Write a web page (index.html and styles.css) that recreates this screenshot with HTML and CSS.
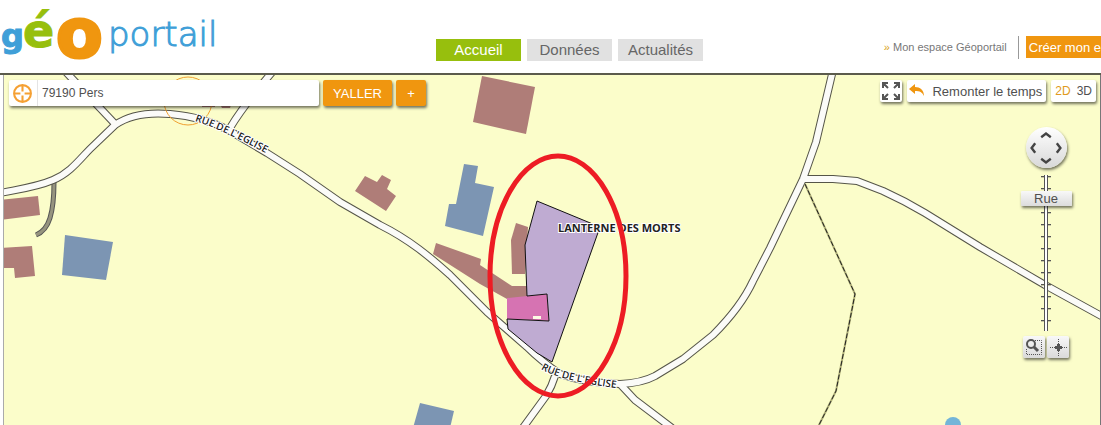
FILE: index.html
```html
<!DOCTYPE html>
<html lang="fr">
<head>
  <meta charset="UTF-8">
  <meta name="viewport" content="width=device-width, initial-scale=1.0">
  <title>Géoportail</title>
  <link rel="stylesheet" href="styles.css">
</head>
<body>
  <header class="header">
    <a class="logo" href="#" aria-label="Géoportail">
      <svg width="224" height="73" viewBox="0 0 224 73">
        <text class="logo-g" x="1" y="47">g</text>
        <text class="logo-e" x="23" y="47">é</text>
        <text class="logo-o" x="56" y="57">o</text>
        <text class="logo-portail" x="108" y="46">portail</text>
      </svg>
    </a>
    <nav class="tabs">
      <a class="tab active" href="#">Accueil</a>
      <a class="tab" href="#">Données</a>
      <a class="tab" href="#">Actualités</a>
    </nav>
    <div class="account">
      <a class="my-space" href="#"><span class="arrows">»</span> Mon espace Géoportail</a>
      <button class="create">Créer mon e</button>
    </div>
  </header>

  <main class="map">
    <svg class="map-canvas" viewBox="4 75 1096 350" preserveAspectRatio="xMinYMin slice">
      <defs>
        <g id="roads">
          <path d="M0 193C20 189 37 187 53 180C70 173 80 159 90 149L115 125Q135 111 170 114Q205 117 230 131L267 153L300 174L340 202L380 225C410 240 430 257 450 275L487 312L527 347Q541 361 560 374Q585 383 620 384Q642 383 655 376L683 359L713 335Q741 307 753 281L770 248L803 179L816 142L833 70"/>
          <path d="M803 179H833L857 181L883 191Q905 201 925 213L980 247L1045 285L1105 318"/>
          <path d="M117 126L64 70"/>
          <path d="M230 128Q243 106 274 70"/>
          <path d="M555 376Q552 386 546 396L522 429"/>
          <path d="M620 384L635 400L672 428"/>
        </g>
        <path id="street-west" d="M195 121Q223 130 267 154"/>
        <path id="street-south" d="M541 369Q558 380 615 388"/>
      </defs>

      <!-- bâtiments -->
      <g class="house">
        <path d="M482 76L535 87L526 134L473 122Z"/>
        <path d="M0 200L38 196L40 215L0 220Z"/>
        <path d="M0 248L32 246L35 276L15 278L14 268H0Z"/>
        <path d="M365 176L377 182L382 175L391 180L387 189L396 196L386 211L355 191Z"/>
        <path d="M436 243L481 259L480 265L512 286H527V297L507 299L480 284L433 254Z"/>
        <path d="M516 223L528 227L525 274H512L511 240Z"/>
        <path d="M202 102H215V107H202ZM220 104L232 102L230 108H222Z"/>
      </g>
      <g class="farm">
        <path d="M65 235L113 242L106 280L62 275Z"/>
        <path d="M464 164L478 166L475 183L494 187L483 236L445 226L449 204H456Z"/>
        <path d="M420 403L454 411L450 428H413Z"/>
      </g>
      <circle class="pond" cx="953" cy="425" r="8"/>

      <!-- routes -->
      <path class="lane-edge" d="M54 182Q54 205 50 218Q46 231 36 235"/>
      <path class="lane" d="M54 182Q54 205 50 218Q46 231 36 235"/>
      <use class="road-edge" href="#roads"/>
      <use class="road" href="#roads"/>
      <path class="trail-base" d="M805 184L855 294L836 391L818 427"/>
      <path class="trail" d="M805 184L855 294L836 391L818 427"/>

      <!-- parcelle -->
      <path class="church" d="M507 298L547 294L549 321L507 319Z"/>
      <path class="parcel" d="M537 201L600 227L552 362L537 353L508 329L507 319L549 321L547 294L527 296L525 245Z"/>
      <rect class="gap" x="533" y="316" width="8" height="3"/>

      <circle class="marker" cx="188" cy="101" r="24"/>
      <text class="label"><textPath href="#street-west">RUE DE L'EGLISE</textPath></text>
      <text class="label"><textPath href="#street-south">RUE DE L'EGLISE</textPath></text>
      <text class="label place" x="558" y="232">LANTERNE DES MORTS</text>
      <ellipse class="ring" cx="558" cy="276" rx="68" ry="120"/>
    </svg>

    <div class="toolbar">
      <form class="search">
        <label class="search-box">
          <svg class="target" viewBox="0 0 20 20" aria-label="Lieu">
            <circle cx="10" cy="10" r="8"/>
            <path d="M10 2v6M10 12v6M2 10h6M12 10h6"/>
          </svg>
          <input class="search-input" type="text" value="79190 Pers">
        </label>
        <button class="orange go" type="button">YALLER</button>
        <button class="orange more" type="button">+</button>
      </form>
      <div class="tools">
        <button class="tool full" aria-label="Plein écran">
          <svg width="20" height="20" viewBox="0 0 20 20">
            <path d="M2 7V2h5M2 2l5 5M13 2h5v5M18 2l-5 5M2 13v5h5M2 18l5-5M18 13v5h-5M18 18l-5-5"/>
          </svg>
        </button>
        <button class="tool time">
          <svg width="16" height="14" viewBox="0 0 16 14">
            <path d="M0 5L6 0V3C11 3 15 6 15 12C13 8 11 7 6 7V10Z"/>
          </svg>
          Remonter le temps
        </button>
        <div class="tool dims">
          <button class="dim on">2D</button>
          <button class="dim">3D</button>
        </div>
      </div>
    </div>

    <div class="navigator">
      <div class="compass">
        <button class="north" aria-label="Nord"><svg viewBox="0 0 10 10"><path d="M1 6l4-3 4 3"/></svg></button>
        <button class="west" aria-label="Ouest"><svg viewBox="0 0 10 10"><path d="M6 1L3 5l3 4"/></svg></button>
        <button class="east" aria-label="Est"><svg viewBox="0 0 10 10"><path d="M4 1l3 4-3 4"/></svg></button>
        <button class="south" aria-label="Sud"><svg viewBox="0 0 10 10"><path d="M1 4l4 3 4-3"/></svg></button>
      </div>
      <div class="zoom">
        <input class="zoom-range" id="zoom" type="range" min="0" max="100" value="89">
        <label class="zoom-label" for="zoom">Rue</label>
      </div>
      <div class="zoom-tools">
        <button class="square" aria-label="Zoom sur une zone">
          <svg width="20" height="20" viewBox="0 0 20 20">
            <path class="dots" d="M11 3.500H17.500V17.500H2.500V12"/>
            <circle cx="7" cy="7" r="4"/>
            <path class="handle" d="M10 10l4 4"/>
          </svg>
        </button>
        <button class="square" aria-label="Recentrer">
          <svg width="20" height="20" viewBox="0 0 20 20">
            <path class="dots" d="M10.500 2V19M2 10.500H19"/>
            <path class="handle" d="M10.500 7v7M7 10.500h7"/>
          </svg>
        </button>
      </div>
    </div>
  </main>
</body>
</html>
```
FILE: styles.css
```css
:root {
  --orange: #f0960f;
  --green: #97bf0d;
  --blue: #3f9fd8;
  --dark: #5b5b4c;
  --ground: #fbfdca;
  --text: #505050;
  --shadow: 1px 2px 3px rgba(0, 0, 0, 0.55);
}

* {
  box-sizing: border-box;
}

body {
  margin: 0;
  min-height: 100vh;
  display: flex;
  flex-direction: column;
  font-family: "Liberation Sans", Arial, sans-serif;
  font-size: 12px;
  color: var(--text);
  background: #fff;
  overflow-x: hidden;
}

button {
  padding: 0;
  border: none;
  background: none;
  font: inherit;
  color: inherit;
  cursor: pointer;
}

a {
  color: inherit;
  text-decoration: none;
}

svg {
  display: block;
}

/* En-tête */
.header {
  display: grid;
  grid-template-columns: 436px auto 1fr;
  align-items: start;
  border-bottom: 2px solid var(--dark);
}

.logo svg {
  overflow: visible;
}

.logo text {
  font-family: "DejaVu Sans", sans-serif;
  font-weight: bold;
  stroke-width: 1;
}

.logo .logo-g {
  font-size: 32px;
  fill: var(--blue);
  stroke: var(--blue);
}

.logo .logo-e {
  font-size: 46px;
  fill: var(--green);
  stroke: var(--green);
}

.logo .logo-o {
  font-size: 68px;
  fill: var(--orange);
  stroke: var(--orange);
  stroke-width: 3;
}

.logo .logo-portail {
  font-size: 34px;
  font-weight: 200;
  fill: var(--blue);
  stroke: var(--blue);
}

.tabs {
  display: flex;
  gap: 6px;
  padding-top: 39px;
}

.tab {
  width: 85px;
  line-height: 22px;
  font-size: 15px;
  text-align: center;
  color: #666;
  background: #e1e1e1;
}

.tab.active {
  color: #fff;
  background: var(--green);
}

.account {
  display: flex;
  justify-content: flex-end;
  padding-top: 36px;
}

.my-space {
  padding-right: 11px;
  margin-right: 7px;
  border-right: 1px solid #999;
  font-size: 11px;
  line-height: 23px;
  color: #777;
}

.arrows {
  color: #d9a520;
}

.create {
  height: 22px;
  padding-left: 3px;
  font-size: 13px;
  color: #fff;
  background: var(--orange);
  white-space: nowrap;
}

/* Carte */
.map {
  flex: 1;
  position: relative;
  margin-left: 3px;
  min-height: 350px;
  border-left: 1px solid #aaa;
  border-right: 1px solid #777;
  background: var(--ground);
  overflow: hidden;
}

.map-canvas {
  position: absolute;
  inset: 0;
  width: 100%;
  height: 100%;
}

.house {
  fill: #af7d78;
}

.farm {
  fill: #7c95b3;
}

.pond {
  fill: #73b5d8;
}

.road-edge,
.road {
  fill: none;
  stroke: #555548;
  stroke-width: 8;
  stroke-linejoin: round;
}

.road {
  stroke: #fbfbf8;
  stroke-width: 6;
}

.lane-edge,
.lane {
  fill: none;
  stroke: #555;
  stroke-width: 5;
}

.lane {
  stroke: #96947f;
  stroke-width: 3;
}

.trail-base,
.trail {
  fill: none;
  stroke: #b0b078;
  stroke-width: 2;
}

.trail {
  stroke: #222;
  stroke-width: 1;
  stroke-dasharray: 5 2;
}

.church {
  fill: #d673b2;
}

.parcel {
  fill: #bfabd2;
  stroke: #111;
  stroke-width: 1;
}

.gap {
  fill: #fdfbe4;
}

.marker {
  fill: none;
  stroke: #f0a030;
  stroke-width: 1;
}

.label {
  font-family: "Open Sans", sans-serif;
  font-size: 10px;
  font-weight: 600;
  fill: #222;
  stroke: #fff;
  stroke-width: 2;
  paint-order: stroke;
}

.place {
  font-size: 11px;
  font-weight: 700;
}

.ring {
  fill: none;
  stroke: #ed1c24;
  stroke-width: 5;
}

/* Barre d'outils */
.toolbar {
  position: relative;
  display: flex;
  justify-content: space-between;
  padding: 5px 4px 0 5px;
}

.search {
  display: flex;
  gap: 4px;
}

.search-box {
  display: flex;
  align-items: center;
  width: 310px;
  height: 26px;
  padding-left: 3px;
  background: #fff;
  border-radius: 2px;
  box-shadow: var(--shadow);
}

.target {
  width: 21px;
  height: 21px;
  fill: none;
  stroke: #f5a033;
  stroke-width: 2;
}

.search-input {
  flex: 1;
  min-width: 0;
  height: 26px;
  margin-left: 4px;
  padding: 0 4px;
  border: none;
  border-left: 1px solid #e4e4e4;
  outline: none;
  background: none;
  font: inherit;
  color: inherit;
}

.orange {
  height: 26px;
  font-size: 13px;
  color: #fff;
  background: var(--orange);
  border-radius: 2px;
  box-shadow: var(--shadow);
}

.go {
  width: 69px;
}

.more {
  width: 30px;
}

.tools {
  display: flex;
  gap: 5px;
}

.tool {
  display: flex;
  align-items: center;
  height: 22px;
  background: #fff;
  border-radius: 2px;
  box-shadow: var(--shadow);
}

.full {
  width: 22px;
  justify-content: center;
}

.full path {
  fill: none;
  stroke: #555;
  stroke-width: 2;
}

.time {
  gap: 7px;
  padding: 0 4px 0 2px;
  font-size: 13px;
}

.time path {
  fill: var(--orange);
}

.dims {
  gap: 6px;
  padding: 0 4px;
}

.dim.on {
  color: #e09a20;
}

/* Navigation */
.navigator {
  position: absolute;
  top: 52px;
  right: 28px;
  width: 52px;
  display: flex;
  flex-direction: column;
  align-items: center;
}

.compass {
  display: grid;
  grid-template: repeat(3, 12px) / repeat(3, 12px);
  place-content: center;
  width: 41px;
  height: 41px;
  border-radius: 50%;
  background: linear-gradient(#fff, #d8d8d8);
  box-shadow: var(--shadow);
}

.compass svg {
  width: 12px;
  height: 12px;
  fill: none;
  stroke: #444;
  stroke-width: 2;
}

.north {
  grid-area: 1 / 2;
}

.west {
  grid-area: 2 / 1;
}

.east {
  grid-area: 2 / 3;
}

.south {
  grid-area: 3 / 2;
}

.zoom {
  position: relative;
  margin-top: 7px;
}

.zoom-range {
  display: block;
  appearance: none;
  writing-mode: vertical-lr;
  direction: rtl;
  width: 51px;
  height: 156px;
  margin: 0;
  background:
    linear-gradient(90deg, #555 1px, #fff 1px 3px, #555 3px) center / 4px 100% no-repeat,
    repeating-linear-gradient(transparent 0 1px, #555 1px 2px, #c8c8a4 2px 3px, transparent 3px 12px) center / 10px 100% no-repeat;
}

.zoom-range::-webkit-slider-thumb {
  appearance: none;
  width: 51px;
  height: 15px;
  border-radius: 1px;
  background: linear-gradient(#f8f8f8, #dcdcdc);
  box-shadow: var(--shadow);
}

.zoom-label {
  position: absolute;
  top: 16px;
  left: 0;
  width: 100%;
  line-height: 15px;
  font-size: 13px;
  text-align: center;
  pointer-events: none;
}

.zoom-tools {
  display: flex;
  gap: 2px;
  margin-top: 5px;
}

.square {
  padding: 1px;
  background: linear-gradient(#f8f8f8, #dadada);
  border-radius: 2px;
  box-shadow: var(--shadow);
}

.square svg {
  fill: none;
  stroke: #555;
  stroke-width: 2;
}

.dots {
  stroke-width: 1;
  stroke-dasharray: 1 1;
}

.handle {
  stroke-width: 3;
}
```
